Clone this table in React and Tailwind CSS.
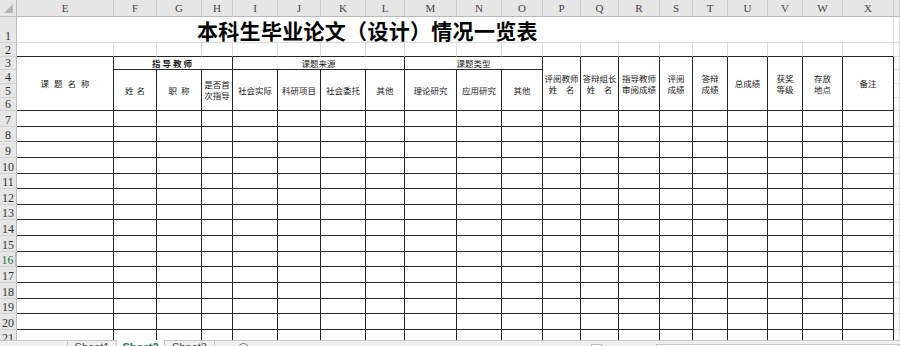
import React from "react";

const COLS = ["E", "F", "G", "H", "I", "J", "K", "L", "M", "N", "O", "P", "Q", "R", "S", "T", "U", "V", "W", "X"];
const BODY_ROWS = [7, 8, 9, 10, 11, 12, 13, 14, 15, 16, 17, 18, 19, 20, 21];

const colHead =
  "flex items-center justify-center border-r border-b border-r-[#c9c9c9] border-b-[#b9b9b9] bg-[#e6e6e6] text-[11px] leading-none text-[#444] font-['Liberation_Serif',serif]";
const rowHead =
  "flex items-end justify-center border-r border-b border-r-[#b9b9b9] border-b-[#d2d2d2] bg-[#e6e6e6] text-[12px] leading-[11px] text-[#333] font-['Liberation_Serif',serif]";
const dark = "border-r border-b border-[#262626]";
const light = "border-r border-b border-[#dadada]";
const th = `flex flex-col items-center justify-center text-center text-[8.5px] leading-[11px] text-[#1a1a1a] ${dark}`;

function RowHead({ n }) {
  if (n === 16) {
    return (
      <div className={`${rowHead} border-r-2 border-r-[#217346] text-[#217346]`}>{n}</div>
    );
  }
  return <div className={rowHead}>{n}</div>;
}

function TwoLine({ a, b }) {
  return (
    <>
      <span>{a}</span>
      <span>{b}</span>
    </>
  );
}

export default function App() {
  return (
    <div className="h-[346px] w-[900px] overflow-hidden bg-white font-['Noto_Sans_CJK_SC','Liberation_Sans',sans-serif]">
      <div className="h-[340px] overflow-hidden">
        <div className="grid grid-cols-[17px_97px_43px_45px_31px_45px_43px_45px_39px_52px_45px_41px_38px_38px_41px_33px_35px_40px_35px_40px_51px_1fr] grid-rows-[17px_26px_14px_13px_14px_14px_13px_repeat(15,15.64px)]">
          {/* column letters */}
          <div className="relative border-r border-b border-r-[#b9b9b9] border-b-[#b9b9b9] bg-[#e6e6e6]">
            <svg className="absolute bottom-[3px] right-[3px]" width="9" height="9" viewBox="0 0 9 9">
              <polygon points="9,0 9,9 0,9" fill="#b3b3b3" />
            </svg>
          </div>
          {COLS.map((c) => (
            <div key={c} className={colHead}>
              {c}
            </div>
          ))}
          <div className={colHead} />

          {/* row 1: title */}
          <RowHead n={1} />
          <div className="col-span-20 flex items-end border-r border-b border-[#dadada] pl-[180px]">
            <span className="text-[21px] font-bold leading-[24px] tracking-[0.3px] text-black">
              本科生毕业论文（设计）情况一览表
            </span>
          </div>
          <div className={light} />

          {/* row 2 */}
          <RowHead n={2} />
          {COLS.map((c) => (
            <div key={c} className="border-r border-b border-r-[#dadada] border-b-[#262626]" />
          ))}
          <div className={light} />

          {/* row 3 */}
          <RowHead n={3} />
          <div className={`${th} row-span-4 pl-[5px] tracking-[5px]`}>课题名称</div>
          <div className={`${th} col-span-3 font-bold tracking-[2px]`}>指导教师</div>
          <div className={`${th} col-span-4`}>课题来源</div>
          <div className={`${th} col-span-3`}>课题类型</div>
          <div className={`${th} row-span-4 whitespace-nowrap`}>
            <TwoLine a="评阅教师" b="姓　名" />
          </div>
          <div className={`${th} row-span-4 whitespace-nowrap`}>
            <TwoLine a="答辩组长" b="姓　名" />
          </div>
          <div className={`${th} row-span-4 whitespace-nowrap`}>
            <TwoLine a="指导教师" b="审阅成绩" />
          </div>
          <div className={`${th} row-span-4`}>
            <TwoLine a="评阅" b="成绩" />
          </div>
          <div className={`${th} row-span-4`}>
            <TwoLine a="答辩" b="成绩" />
          </div>
          <div className={`${th} row-span-4`}>总成绩</div>
          <div className={`${th} row-span-4`}>
            <TwoLine a="获奖" b="等级" />
          </div>
          <div className={`${th} row-span-4`}>
            <TwoLine a="存放" b="地点" />
          </div>
          <div className={`${th} row-span-4`}>备注</div>
          <div className={light} />

          {/* row 4 */}
          <RowHead n={4} />
          <div className={`${th} row-span-3 pl-[3px] tracking-[3px]`}>姓名</div>
          <div className={`${th} row-span-3 pl-[4px] tracking-[4px]`}>职称</div>
          <div className={`${th} row-span-3`}>
            <TwoLine a="是否首" b="次指导" />
          </div>
          <div className={`${th} row-span-3`}>社会实际</div>
          <div className={`${th} row-span-3`}>科研项目</div>
          <div className={`${th} row-span-3`}>社会委托</div>
          <div className={`${th} row-span-3`}>其他</div>
          <div className={`${th} row-span-3`}>理论研究</div>
          <div className={`${th} row-span-3`}>应用研究</div>
          <div className={`${th} row-span-3`}>其他</div>
          <div className={light} />

          <RowHead n={5} />
          <div className={light} />
          <RowHead n={6} />
          <div className={light} />

          {/* body */}
          {BODY_ROWS.map((r) => (
            <React.Fragment key={r}>
              <RowHead n={r} />
              {COLS.map((c) => (
                <div key={c} className={dark} />
              ))}
              <div className={light} />
            </React.Fragment>
          ))}
        </div>
      </div>

      {/* sheet tabs */}
      <div className="relative flex h-[24px] border-t border-[#c6c6c6] bg-[#efefef] font-['Liberation_Sans',sans-serif] text-[11px] leading-[10px]">
        <div className="w-[68px] border-r border-[#c6c6c6]" />
        <div className="w-[49px] border-r border-[#c6c6c6] pt-[1px] text-center text-[#444]">Sheet1</div>
        <div className="-mt-px w-[48px] border-r border-[#c6c6c6] bg-white pt-[2px] text-center font-bold text-[#217346]">
          Sheet2
        </div>
        <div className="w-[50px] border-r border-[#c6c6c6] pt-[1px] text-center text-[#444]">Sheet3</div>
        <div className="ml-[23px] mt-[2px] h-[11px] w-[11px] rounded-full border border-[#777]" />
        <div className="ml-[342px] mt-[3px] h-[10px] w-[11px] border border-[#bbb] bg-white" />
        <div className="ml-[54px] mt-[3px] h-[12px] flex-1 border border-[#c6c6c6] bg-white" />
      </div>
    </div>
  );
}
